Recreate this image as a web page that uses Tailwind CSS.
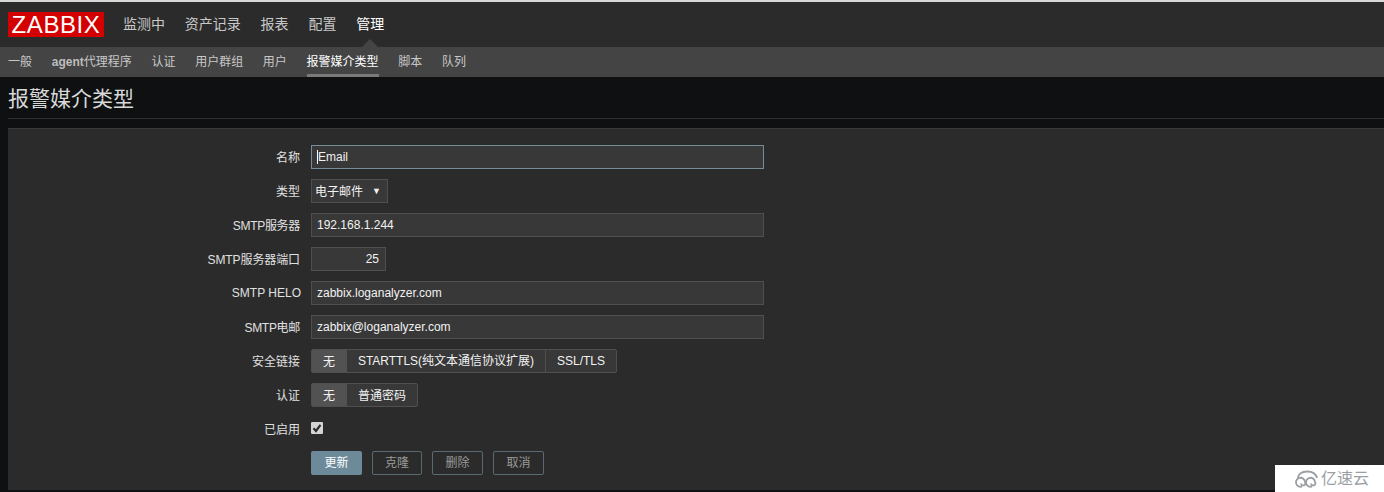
<!DOCTYPE html>
<html lang="zh-CN">
<head>
    <meta charset="UTF-8">
    <title>报警媒介类型</title>
    <script src="https://cdn.jsdelivr.net/npm/@tailwindcss/browser@4"></script>
</head>
<body class="bg-[#0e1012] font-['Liberation_Sans','Noto_Sans_CJK_SC',sans-serif] text-[12px] text-[#f2f2f2] h-[492px] w-[1384px] overflow-hidden relative">

    <!-- Top nav -->
    <div class="h-[2px] bg-[#d8d8d8]"></div>
    <nav class="h-[45px] bg-[#2b2b2b] flex items-center relative">
        <div class="ml-[8px] self-start mt-[10px] w-[96px] h-[25px] bg-[#d40000] text-white text-[24px] leading-[25px] text-center tracking-[0.6px]">ZABBIX</div>
        <div class="flex ml-[19px] gap-[19.8px] text-[14px] text-[#c8c8c8]">
            <span>监测中</span>
            <span>资产记录</span>
            <span>报表</span>
            <span>配置</span>
            <span class="text-white">管理</span>
        </div>
        <div class="absolute left-[362px] bottom-0 w-0 h-0 border-x-[8px] border-x-transparent border-b-[8px] border-b-[#444444]"></div>
    </nav>

    <!-- Sub nav -->
    <div class="h-[30px] bg-[#444444] flex items-center pl-[8px] gap-[19.7px] text-[#c8c8c8]">
        <span>一般</span>
        <span><b class="font-bold text-[#bdbdbd]">agent</b>代理程序</span>
        <span>认证</span>
        <span>用户群组</span>
        <span>用户</span>
        <span class="text-white h-full flex items-center border-b-[3px] border-[#7a7a7a] pt-[3px]">报警媒介类型</span>
        <span>脚本</span>
        <span>队列</span>
    </div>

    <!-- Title -->
    <div class="ml-[8px] h-[42px] border-b border-[#2f2f2f] flex items-center pt-[2px] text-[21px] text-[#d8d8d8]">报警媒介类型</div>

    <!-- Form card -->
    <div class="ml-[8px] mt-[9px] h-[362px] bg-[#2b2b2b] border-t border-[#383838] pt-[16px]">
        <div class="flex flex-col gap-[10px]">
            <div class="flex items-center h-[24px]">
                <label class="w-[292px] pt-[2px] text-right text-[#e0e0e0]">名称</label>
                <div class="ml-[11px] w-[453px] h-[24px] bg-[#383838] border border-[#768d99] pl-[5px] flex items-center text-[#f0f0f0]"><span class="border-l border-white leading-[14px]">Email</span></div>
            </div>
            <div class="flex items-center h-[24px]">
                <label class="w-[292px] pt-[2px] text-right text-[#e0e0e0]">类型</label>
                <div class="ml-[11px] w-[77px] h-[24px] bg-[#383838] border border-[#4f4f4f] pl-[3px] pt-[2px] flex items-center">电子邮件<span class="ml-[9px] text-[9px]">▼</span></div>
            </div>
            <div class="flex items-center h-[24px]">
                <label class="w-[292px] pt-[2px] text-right text-[#e0e0e0] tracking-[-0.3px]">SMTP服务器</label>
                <div class="ml-[11px] w-[453px] h-[24px] bg-[#383838] border border-[#4f4f4f] pl-[5px] flex items-center">192.168.1.244</div>
            </div>
            <div class="flex items-center h-[24px]">
                <label class="w-[292px] pt-[2px] text-right text-[#e0e0e0] tracking-[-0.1px]">SMTP服务器端口</label>
                <div class="ml-[11px] w-[75px] h-[24px] bg-[#383838] border border-[#4f4f4f] pr-[6px] flex items-center justify-end">25</div>
            </div>
            <div class="flex items-center h-[24px]">
                <label class="w-[293px] -mr-[1px] text-right text-[#e0e0e0]">SMTP HELO</label>
                <div class="ml-[11px] w-[453px] h-[24px] bg-[#383838] border border-[#4f4f4f] pl-[5px] flex items-center">zabbix.loganalyzer.com</div>
            </div>
            <div class="flex items-center h-[24px]">
                <label class="w-[292px] pt-[2px] text-right text-[#e0e0e0] tracking-[-0.3px]">SMTP电邮</label>
                <div class="ml-[11px] w-[453px] h-[24px] bg-[#383838] border border-[#4f4f4f] pl-[5px] flex items-center">zabbix@loganalyzer.com</div>
            </div>
            <div class="flex items-center h-[24px]">
                <label class="w-[292px] pt-[2px] text-right text-[#e0e0e0]">安全链接</label>
                <div class="ml-[11px] h-[24px] flex border border-[#4f4f4f] rounded-[2px] bg-[#383838]">
                    <span class="w-[35px] pt-[1px] pr-[1px] bg-[#525252] flex items-center justify-center">无</span>
                    <span class="w-[199px] border-r border-[#4f4f4f] flex items-center justify-center">STARTTLS(纯文本通信协议扩展)</span>
                    <span class="w-[70px] flex items-center justify-center">SSL/TLS</span>
                </div>
            </div>
            <div class="flex items-center h-[24px]">
                <label class="w-[292px] pt-[2px] text-right text-[#e0e0e0]">认证</label>
                <div class="ml-[11px] h-[24px] flex border border-[#4f4f4f] rounded-[2px] bg-[#383838]">
                    <span class="w-[35px] pt-[1px] pr-[1px] bg-[#525252] flex items-center justify-center">无</span>
                    <span class="w-[70px] pt-[1px] flex items-center justify-center">普通密码</span>
                </div>
            </div>
            <div class="flex items-center h-[24px]">
                <label class="w-[292px] pt-[2px] text-right text-[#e0e0e0]">已启用</label>
                <div class="ml-[11px] w-[12px] h-[12px] bg-[#d4d4d4] rounded-[1px] flex items-center justify-center mb-[2px]">
                    <svg viewBox="0 0 12 12" class="w-[12px] h-[12px]"><path d="M2.5 6.2 L5 9 L9.5 2.8" fill="none" stroke="#2b2b2b" stroke-width="2.2"/></svg>
                </div>
            </div>
        </div>
        <div class="flex ml-[303px] mt-[10px] gap-[10px] text-[#9a9a9a]">
            <button class="w-[51px] h-[24px] bg-[#6d8a9b] text-white rounded-[2px]">更新</button>
            <button class="w-[50px] h-[24px] border border-[#5a6a72] rounded-[2px]">克隆</button>
            <button class="w-[51px] h-[24px] border border-[#5a6a72] rounded-[2px]">删除</button>
            <button class="w-[51px] h-[24px] border border-[#5a6a72] rounded-[2px]">取消</button>
        </div>
    </div>

    <!-- Watermark -->
    <div class="absolute right-0 bottom-0 w-[109px] h-[27px] bg-white flex items-center pl-[19px] text-[#9a9fa4] text-[16px]">
        <svg viewBox="0 0 26 18" class="w-[26px] h-[18px] mr-[1px]" fill="none" stroke="#9a9fa4" stroke-width="1.8">
            <path d="M8 16.5 A4.5 4.5 0 1 1 11 12 A2.2 2.2 0 1 1 7 13.5"/>
            <path d="M18 16.5 A4.5 4.5 0 1 1 21 12 A2.2 2.2 0 1 1 17 13.5"/>
            <path d="M4 8 C4 4 8 1.5 13 1.5 C18 1.5 22 4 23 8"/>
        </svg>
        <span>亿速云</span>
    </div>
</body>
</html>
